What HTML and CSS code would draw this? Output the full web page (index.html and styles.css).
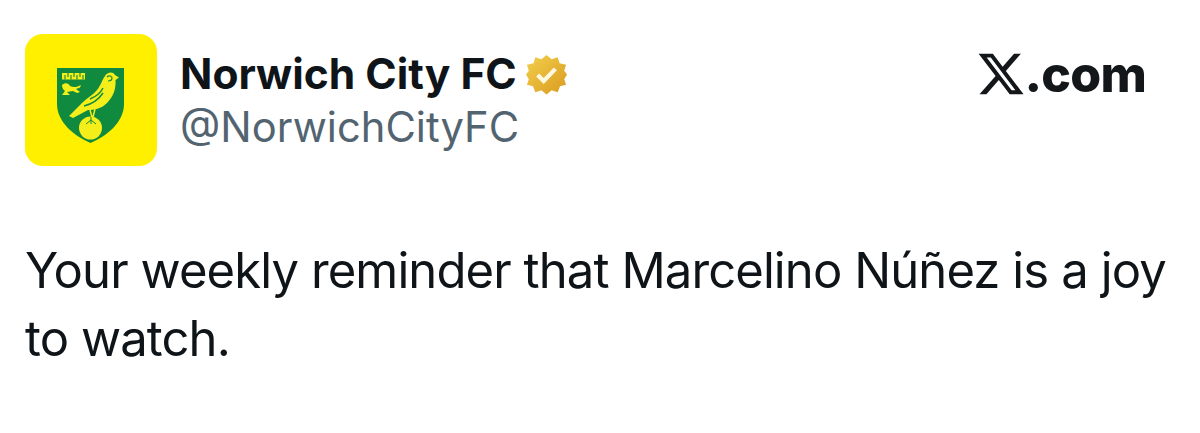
FILE: index.html
```html
<!DOCTYPE html>
<html lang="en">
<head>
<meta charset="utf-8">
<title>Norwich City FC on X</title>
<link rel="stylesheet" href="styles.css">
</head>
<body>
<main class="post">
  <header class="head">
    <div class="avatar">
      <svg class="crest" viewBox="0 0 68 76" aria-hidden="true">
        <path d="M0 0H67V36C67 54 50 68 33.500 75C17 68 0 54 0 36Z" fill="#0f8a3e"/>
        <path d="M5 5H28V11.500H5Z" fill="#f4ee1a"/>
        <path d="M8 7V11.500M11 5V9M14 7V11.500M17 5V9M20 7V11.500M23 5V9M26 7V11.500" stroke="#0f8a3e" stroke-width="1.100"/>
        <path d="M5 17C8 14 12 15 13 18C17 20 20 19 24 17L23 19.500L19 21L23 24L20 25L16 23L10 24L13 27L5 27L8 23C6 21.500 5 19.500 5 17Z" fill="#f4ee1a"/>
        <path d="M48 8C50 4 56 3 58 7L62 9.500L58.500 12C59 20 57 28 50 35C44 41 37 42 31 42L16 50L12 48L25 35C30 30 36 27 40 22C44 17 45 12 48 8Z" fill="#f4ee1a"/>
        <path d="M27 38C35 36 42 31 46 25M33 31C38 29 43 26 46 20" fill="none" stroke="#0f8a3e" stroke-width="1.400"/>
        <path d="M50 9C52 7 55 8 55 10C55 12 53 13 51 13" fill="none" stroke="#0f8a3e" stroke-width="1.200"/>
        <path d="M33 42L35 49M38 41L36 49" fill="none" stroke="#f4ee1a" stroke-width="1.500"/>
        <circle cx="33.500" cy="60" r="11.500" fill="#f4ee1a"/>
        <path d="M34 49V56M34 52L29 56M34 52L39 56" fill="none" stroke="#0f8a3e" stroke-width="1"/>
      </svg>
    </div>
    <div class="names">
      <div class="display">
        <span class="name">Norwich City FC</span>
        <svg class="badge" viewBox="0 0 44 44" aria-hidden="true">
          <defs>
            <linearGradient id="gold" x1="0" y1="0" x2="1" y2="1">
              <stop offset="0" stop-color="#f4d04e"/>
              <stop offset="1" stop-color="#d99a1e"/>
            </linearGradient>
          </defs>
          <path d="M22 1L27.500 5.500L34 3.500L36 10L43 11.500L41 18L44 22L41 27L43 33L36.500 34.500L34 41L27.500 39L22 43.500L16.500 39L10 41L7.500 34.500L1 33L3 27L0 22L3 18L1 11.500L8 10L10 3.500L16.500 5.500Z" fill="url(#gold)"/>
          <path d="M12.500 22.500L19 29L31.500 16" fill="none" stroke="#fff8e0" stroke-width="4.500"/>
        </svg>
      </div>
      <div class="handle">@NorwichCityFC</div>
    </div>
    <div class="brand">
      <svg class="x-mark" viewBox="0 0 24 24" aria-hidden="true">
        <path d="M18.244 2.250h3.308l-7.227 8.260 8.502 11.240H16.170l-5.214-6.817L4.990 21.750H1.680l7.730-8.835L1.254 2.250H8.080l4.713 6.231zm-1.161 17.520h1.833L7.084 4.126H5.117z" fill="#14171a"/>
      </svg>
      <span class="brand-text">.com</span>
    </div>
  </header>
  <p class="text">Your weekly reminder that Marcelino Núñez is a joy to watch.</p>
</main>
</body>
</html>
```
FILE: styles.css
```css
html, body {
  margin: 0;
  padding: 0;
  background: #fff;
}
body {
  font-family: "Inter", "Liberation Sans", sans-serif;
  color: #0f1419;
  overflow: hidden;
}
.post {
  padding: 34px 25px 0;
}
.head {
  display: flex;
  align-items: flex-start;
}
.avatar {
  width: 132px;
  height: 132px;
  box-sizing: border-box;
  padding-top: 11px;
  border-radius: 18px;
  background: #fff000;
  display: flex;
  align-items: center;
  justify-content: center;
  flex: none;
}
.crest {
  width: 68px;
  height: 76px;
}
.names {
  margin-left: 23px;
  padding-top: 12px;
  flex: 1;
}
.display {
  display: flex;
  align-items: center;
  gap: 9px;
  height: 56px;
}
.name {
  font-size: 42.500px;
  font-weight: 700;
  line-height: 56px;
  white-space: nowrap;
}
.badge {
  width: 41px;
  height: 41px;
  flex: none;
}
.handle {
  font-size: 41.700px;
  line-height: 50px;
  color: #536471;
}
.brand {
  display: flex;
  align-items: center;
  margin: 15px 29px 0 0;
}
.x-mark {
  width: 50px;
  height: 50px;
  margin-right: -2px;
}
.brand-text {
  font-size: 50px;
  font-weight: 800;
  line-height: 50px;
  letter-spacing: -0.800px;
  color: #14171a;
}
.text {
  margin: 71px 0 0;
  font-size: 49px;
  line-height: 68px;
  letter-spacing: -0.900px;
}
```
